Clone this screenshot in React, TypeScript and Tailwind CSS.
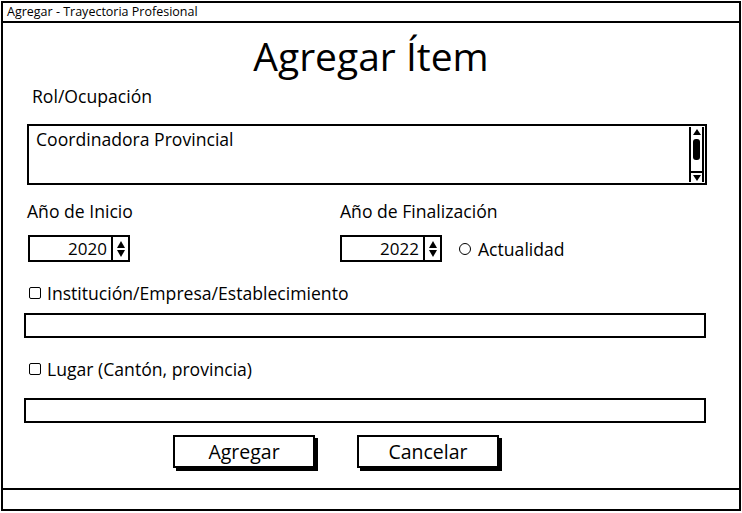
import React from "react";

const font = { fontFamily: "'Open Sans', 'Noto Sans', sans-serif" };

function Spinner({ value }: { value: string }) {
  return (
    <div className="flex h-[27px] w-[102px] border-2 border-black bg-white">
      <div className="flex flex-1 items-center justify-end pr-[4px] text-[17px] leading-none">{value}</div>
      <div className="flex w-[17px] flex-col items-center justify-center border-l-2 border-black">
        <svg width="10" height="20" viewBox="0 0 10 20">
          <path d="M1 9 L5 2 L9 9 Z" fill="black" />
          <path d="M1 11 L5 18 L9 11 Z" fill="black" />
        </svg>
      </div>
    </div>
  );
}

function Check({ label }: { label: string }) {
  return (
    <div className="flex h-[20px] items-center gap-[6px] pl-[26px]">
      <div className="h-[12px] w-[12px] rounded-[2px] border-[1.5px] border-black" />
      <span className="text-[17.6px] leading-[20px]">{label}</span>
    </div>
  );
}

export default function App() {
  return (
    <div className="h-[513px] w-[742px] bg-white pl-[1px] pt-[1px] text-black" style={font}>
      <div className="flex h-[510px] w-[740px] flex-col border-2 border-black">
        <div className="flex h-[20px] items-center border-b-2 border-black pl-[4px] text-[12.5px]">
          Agregar - Trayectoria Profesional
        </div>
        <div className="flex flex-1 flex-col">
          <div className="mt-[13px] text-center text-[39px] leading-[40px]">Agregar Ítem</div>
          <div className="mt-[10px] pl-[29px] text-[17.6px] leading-[20px]">Rol/Ocupación</div>
          <div className="ml-[24px] mt-[18px] flex h-[61px] w-[680px] border-2 border-black">
            <div className="flex-1 pl-[7px] pt-[3px] text-[17.6px] leading-[20px]">Coordinadora Provincial</div>
            <div className="my-[1px] mr-[1px] flex w-[15px] flex-col items-center border-x-2 border-black">
              <svg width="10" height="8" viewBox="0 0 10 8" className="mt-[1px]">
                <path d="M1 7 L5 1 L9 7 Z" fill="black" />
              </svg>
              <div className="mt-[3px] h-[21px] w-[7px] rounded-[3px] bg-black" />
              <div className="mt-auto flex w-full justify-center border-t-2 border-black pt-[1px]">
                <svg width="10" height="8" viewBox="0 0 10 8">
                  <path d="M1 1 L5 7 L9 1 Z" fill="black" />
                </svg>
              </div>
            </div>
          </div>
          <div className="mt-[16px] flex">
            <div className="w-[313px] pl-[24px]">
              <div className="text-[17.6px] leading-[20px]">Año de Inicio</div>
              <div className="mt-[14px] pl-[1px]">
                <Spinner value="2020" />
              </div>
            </div>
            <div className="pl-[24px]">
              <div className="text-[17.6px] leading-[20px]">Año de Finalización</div>
              <div className="mt-[14px] flex items-center">
                <Spinner value="2022" />
                <div className="ml-[17px] h-[12px] w-[12px] rounded-full border-[1.5px] border-black" />
                <span className="ml-[7px] text-[17.6px] leading-[20px]">Actualidad</span>
              </div>
            </div>
          </div>
          <div className="mt-[21px]">
            <Check label="Institución/Empresa/Establecimiento" />
          </div>
          <div className="ml-[21px] mt-[10px] h-[25px] w-[682px] border-2 border-black" />
          <div className="mt-[21px]">
            <Check label="Lugar (Cantón, provincia)" />
          </div>
          <div className="ml-[21px] mt-[19px] h-[25px] w-[682px] border-2 border-black" />
          <div className="mt-[12px] flex pl-[170px]">
            <div className="flex h-[33px] w-[142px] items-center justify-center border-2 border-black text-[19.5px] shadow-[3px_3px_0_#000]">
              Agregar
            </div>
            <div className="ml-[42px] flex h-[33px] w-[142px] items-center justify-center border-2 border-black text-[19.5px] shadow-[3px_3px_0_#000]">
              Cancelar
            </div>
          </div>
        </div>
        <div className="h-[21px] border-t-2 border-black" />
      </div>
    </div>
  );
}
